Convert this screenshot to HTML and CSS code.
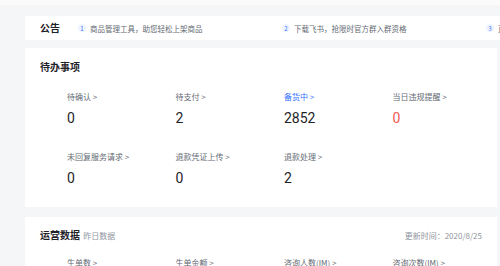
FILE: index.html
```html
<!DOCTYPE html>
<html lang="zh-CN">

<head>
	<meta charset="utf-8">
	<title>工作台</title>
	<link rel="stylesheet" href="styles.css">
</head>

<body>
	<div class="topbar"></div>
	<div class="page">
		<section class="card notice">
			<h3 class="notice-title">公告</h3>
			<ul class="notice-list">
				<li class="notice-item"><span class="idx">1</span>商品管理工具，助您轻松上架商品</li>
				<li class="notice-item"><span class="idx">2</span>下载飞书，抢限时官方群入群资格</li>
				<li class="notice-item"><span class="idx">3</span>直播</li>
			</ul>
		</section>

		<section class="card todo">
			<h3 class="card-title">待办事项</h3>
			<div class="stats">
				<div class="stat">
					<div class="label">待确认 &gt;</div>
					<div class="num">0</div>
				</div>
				<div class="stat">
					<div class="label">待支付 &gt;</div>
					<div class="num">2</div>
				</div>
				<div class="stat">
					<div class="label blue">备货中 &gt;</div>
					<div class="num">2852</div>
				</div>
				<div class="stat">
					<div class="label">当日违规提醒 &gt;</div>
					<div class="num red">0</div>
				</div>
				<div class="stat">
					<div class="label">未回复服务请求 &gt;</div>
					<div class="num">0</div>
				</div>
				<div class="stat">
					<div class="label">退款凭证上传 &gt;</div>
					<div class="num">0</div>
				</div>
				<div class="stat">
					<div class="label">退款处理 &gt;</div>
					<div class="num">2</div>
				</div>
			</div>
		</section>

		<section class="card ops">
			<div class="ops-head">
				<h3 class="card-title">运营数据 <span class="sub">昨日数据</span></h3>
				<span class="updated">更新时间：2020/8/25</span>
			</div>
			<div class="stats">
				<div class="stat">
					<div class="label">生单数 &gt;</div>
				</div>
				<div class="stat">
					<div class="label">生单金额 &gt;</div>
				</div>
				<div class="stat">
					<div class="label">咨询人数(IM) &gt;</div>
				</div>
				<div class="stat">
					<div class="label">咨询次数(IM) &gt;</div>
				</div>
			</div>
		</section>
	</div>
</body>

</html>
```

FILE: styles.css
```css
* {
	margin: 0;
	padding: 0;
	box-sizing: border-box;
}

body {
	background: #f5f6f8;
	font-family: "Noto Sans CJK SC", "Noto Sans", sans-serif;
	color: #1f2329;
	width: 500px;
	height: 266px;
	overflow: hidden;
}

.topbar {
	height: 5px;
	background: #fbfbfc;
}

.page {
	padding: 11px 0 0 25px;
	display: flex;
	flex-direction: column;
	gap: 8px;
	overflow: hidden;
}

.card {
	background: #fff;
	width: 472px;
	padding: 12px 15px;
}

.notice {
	width: 475px;
	height: 24px;
	padding: 0 0 0 15px;
	display: flex;
	align-items: center;
	gap: 20px;
	overflow: hidden;
}

.notice-title,
.card-title {
	font-size: 10px;
	line-height: 14px;
	font-weight: 700;
	white-space: nowrap;
	flex-shrink: 0;
}

.notice-list {
	list-style: none;
	display: flex;
	white-space: nowrap;
	flex-shrink: 0;
}

.notice-item {
	width: 204px;
	font-size: 7.5px;
	color: #646a73;
	display: flex;
	align-items: center;
}

.notice-item:last-child {
	width: auto;
}

.idx {
	width: 8px;
	height: 8px;
	border-radius: 50%;
	background: #eef3ff;
	color: #3370ff;
	font-size: 6px;
	display: flex;
	align-items: center;
	justify-content: center;
	margin-right: 4px;
	margin-left: -2px;
}

.todo {
	padding-bottom: 20px;
}

.ops {
	margin-top: 2px;
	padding-top: 11px;
}

.stats {
	display: grid;
	grid-template-columns: repeat(4, 108.5px);
	row-gap: 24px;
	margin: 17px 0 0 27px;
}

.ops .stats {
	margin-top: 14px;
}

.label {
	font-size: 8px;
	line-height: 12px;
	color: #646a73;
	white-space: nowrap;
}

.label.blue {
	color: #3370ff;
}

.num {
	margin-top: 6px;
	font-family: Roboto, "Noto Sans", sans-serif;
	font-size: 14px;
	line-height: 18px;
}

.num.red {
	color: #f05b56;
}

.ops-head {
	display: flex;
	justify-content: space-between;
	align-items: center;
}

.sub {
	font-size: 8px;
	font-weight: 400;
	color: #8f959e;
	margin-left: 1px;
}

.updated {
	font-size: 8px;
	color: #8f959e;
}
```
